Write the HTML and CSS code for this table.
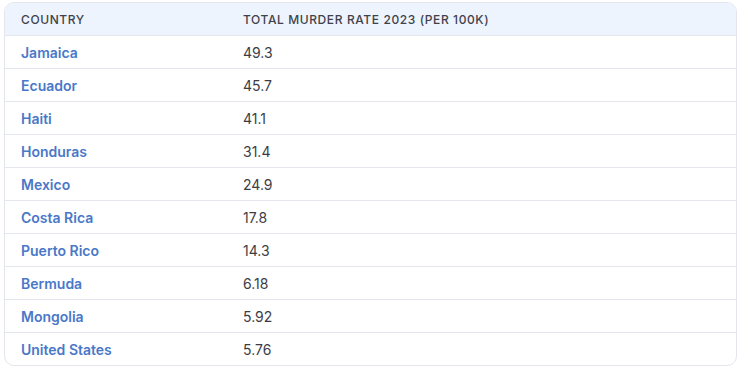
FILE: index.html
```html
<!DOCTYPE html>
<html>
<head>
<meta charset="utf-8">
<link rel="stylesheet" href="styles.css">
</head>
<body>
<div class="wrap">
<table class="tbl">
<thead>
<tr><th class="c1">Country</th><th>Total Murder Rate 2023 (per 100k)</th></tr>
</thead>
<tbody>
<tr><td class="c1"><a>Jamaica</a></td><td>49.3</td></tr>
<tr><td class="c1"><a>Ecuador</a></td><td>45.7</td></tr>
<tr><td class="c1"><a>Haiti</a></td><td>41.1</td></tr>
<tr><td class="c1"><a>Honduras</a></td><td>31.4</td></tr>
<tr><td class="c1"><a>Mexico</a></td><td>24.9</td></tr>
<tr><td class="c1"><a>Costa Rica</a></td><td>17.8</td></tr>
<tr><td class="c1"><a>Puerto Rico</a></td><td>14.3</td></tr>
<tr><td class="c1"><a>Bermuda</a></td><td>6.18</td></tr>
<tr><td class="c1"><a>Mongolia</a></td><td>5.92</td></tr>
<tr><td class="c1"><a>United States</a></td><td>5.76</td></tr>
</tbody>
</table>
</div>
</body>
</html>
```
FILE: styles.css
```css
html, body { margin: 0; padding: 0; background: #fff; }
body { font-family: Inter, "Noto Sans", sans-serif; }
.wrap {
  margin: 2px 3px 0 4px;
  border: 1px solid #e3e6ec;
  border-radius: 10px;
  overflow: hidden;
  width: 731px;
}
.tbl { width: 100%; border-collapse: collapse; table-layout: fixed; }
.tbl th {
  background: #eef4fd;
  text-align: left;
  font-size: 12px;
  font-weight: 500;
  color: #3f424a;
  text-transform: uppercase;
  letter-spacing: 0.6px;
  height: 32px;
  padding: 0 16px;
  border-bottom: 1px solid #e3e6ec;
}
.tbl td {
  height: 32px;
  padding: 0 16px;
  font-size: 14px;
  color: #3c3d44;
  border-bottom: 1px solid #e3e6ec;
}
.tbl tr:last-child td { border-bottom: none; }
.tbl .c1 { width: 190px; }
.tbl a { color: #4a78c8; font-weight: 600; text-decoration: none; }
```
